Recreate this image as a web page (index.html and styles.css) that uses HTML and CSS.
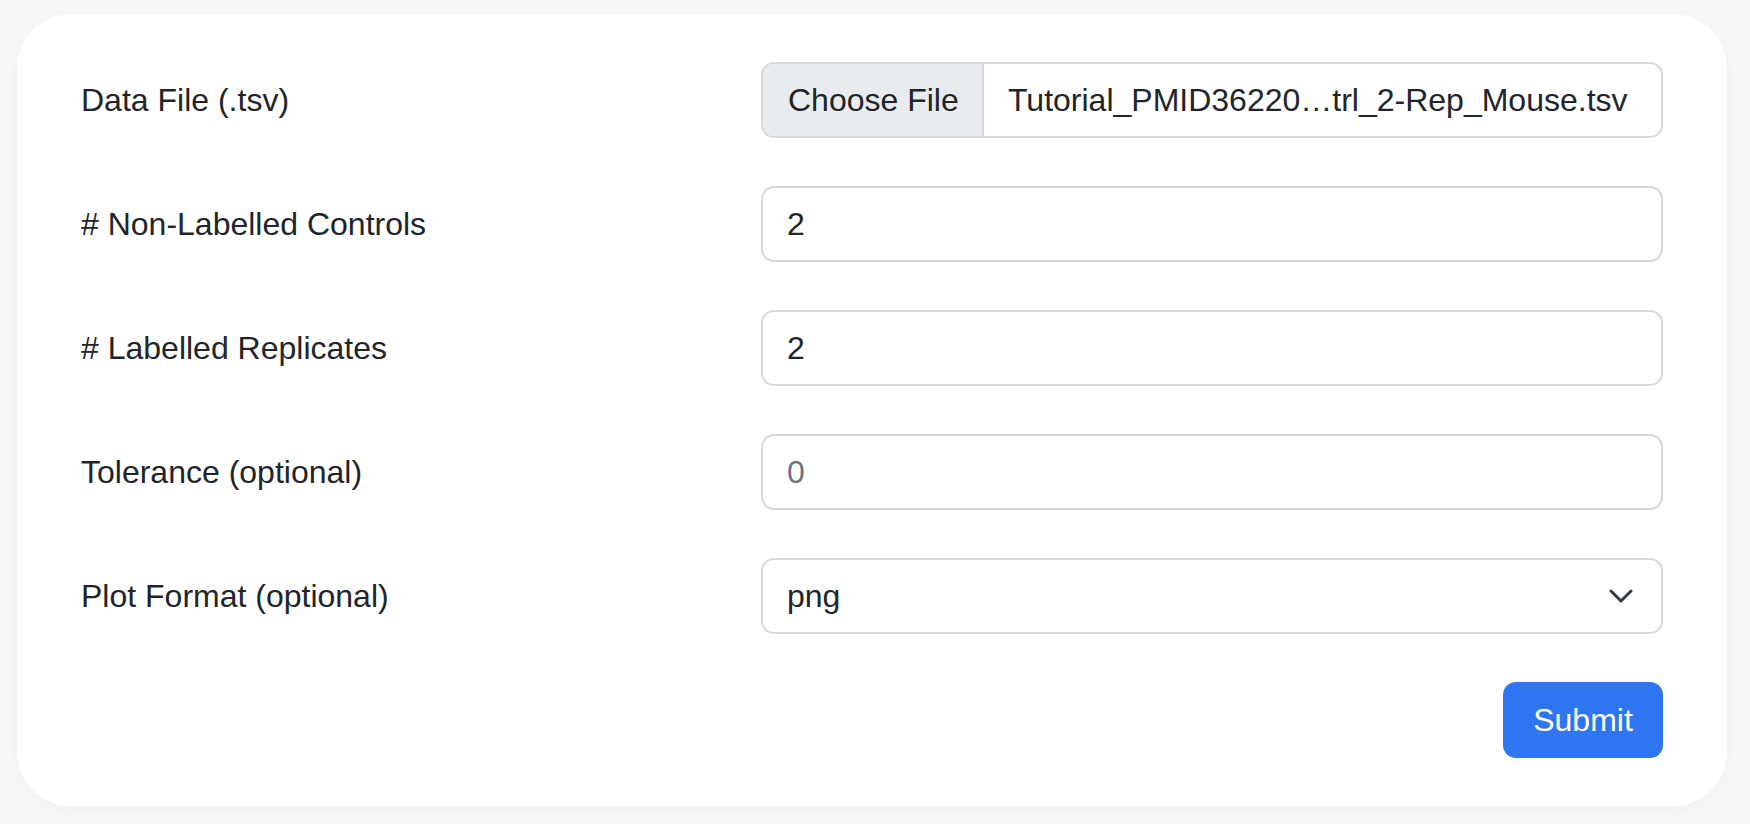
FILE: index.html
```html
<!DOCTYPE html>
<html lang="en">
<head>
<meta charset="utf-8">
<title>Form</title>
<link rel="stylesheet" href="styles.css">
</head>
<body>
<div class="page">
  <form class="card">
    <div class="row">
      <label class="label">Data File (.tsv)</label>
      <div class="control file">
        <span class="file-btn">Choose File</span>
        <span class="file-name">Tutorial_PMID36220…trl_2-Rep_Mouse.tsv</span>
      </div>
    </div>
    <div class="row">
      <label class="label"># Non-Labelled Controls</label>
      <div class="control"><span class="value">2</span></div>
    </div>
    <div class="row">
      <label class="label"># Labelled Replicates</label>
      <div class="control"><span class="value">2</span></div>
    </div>
    <div class="row">
      <label class="label">Tolerance (optional)</label>
      <div class="control"><span class="value placeholder">0</span></div>
    </div>
    <div class="row">
      <label class="label">Plot Format (optional)</label>
      <div class="control select">
        <span class="value">png</span>
        <svg class="chevron" width="24" height="14" viewBox="0 0 24 14"><path d="M2 2l10 10 10-10" fill="none" stroke="#343a40" stroke-width="3" stroke-linecap="round" stroke-linejoin="round"/></svg>
      </div>
    </div>
    <div class="actions">
      <button type="button" class="submit">Submit</button>
    </div>
  </form>
</div>
</body>
</html>
```

FILE: styles.css
```css
html, body {
  margin: 0;
  padding: 0;
  background: #f8f8f9;
}
body {
  font-family: "Liberation Sans", Arial, Helvetica, sans-serif;
  color: #212529;
}
.page {
  padding: 14px 23px 18px 17px;
}
.card {
  background: #ffffff;
  border-radius: 54px;
  box-shadow: 0 4px 18px rgba(0, 0, 0, 0.035);
  padding: 48px 64px 48px 64px;
  height: 792px;
  box-sizing: border-box;
  display: flex;
  flex-direction: column;
}
.row {
  display: grid;
  grid-template-columns: 632px 1fr;
  column-gap: 48px;
  align-items: center;
  margin-bottom: 48px;
}
.label {
  font-size: 32px;
  line-height: 1.5;
}
.control {
  height: 76px;
  box-sizing: border-box;
  border: 2px solid #d5d8dc;
  border-radius: 13px;
  display: flex;
  align-items: center;
  padding: 0 24px;
  font-size: 32px;
  background: #fff;
  position: relative;
}
.value {
  line-height: 1;
}
.placeholder {
  color: #6c757d;
}
.file {
  padding: 0;
  overflow: hidden;
}
.file-btn {
  background: #e9ecef;
  height: 100%;
  display: flex;
  align-items: center;
  padding: 0 22px 0 25px;
  border-right: 2px solid #d5d8dc;
  width: 221px;
  box-sizing: border-box;
  white-space: nowrap;
}
.file-name {
  padding-left: 24px;
  white-space: nowrap;
}
.chevron {
  position: absolute;
  right: 28px;
  top: 50%;
  margin-top: -7px;
}
.actions {
  display: flex;
  justify-content: flex-end;
}
.submit {
  width: 160px;
  height: 76px;
  background: #2f74f1;
  color: #fff;
  border: none;
  border-radius: 13px;
  font-family: "Liberation Sans", Arial, Helvetica, sans-serif;
  font-size: 32px;
  padding: 0;
}
```
